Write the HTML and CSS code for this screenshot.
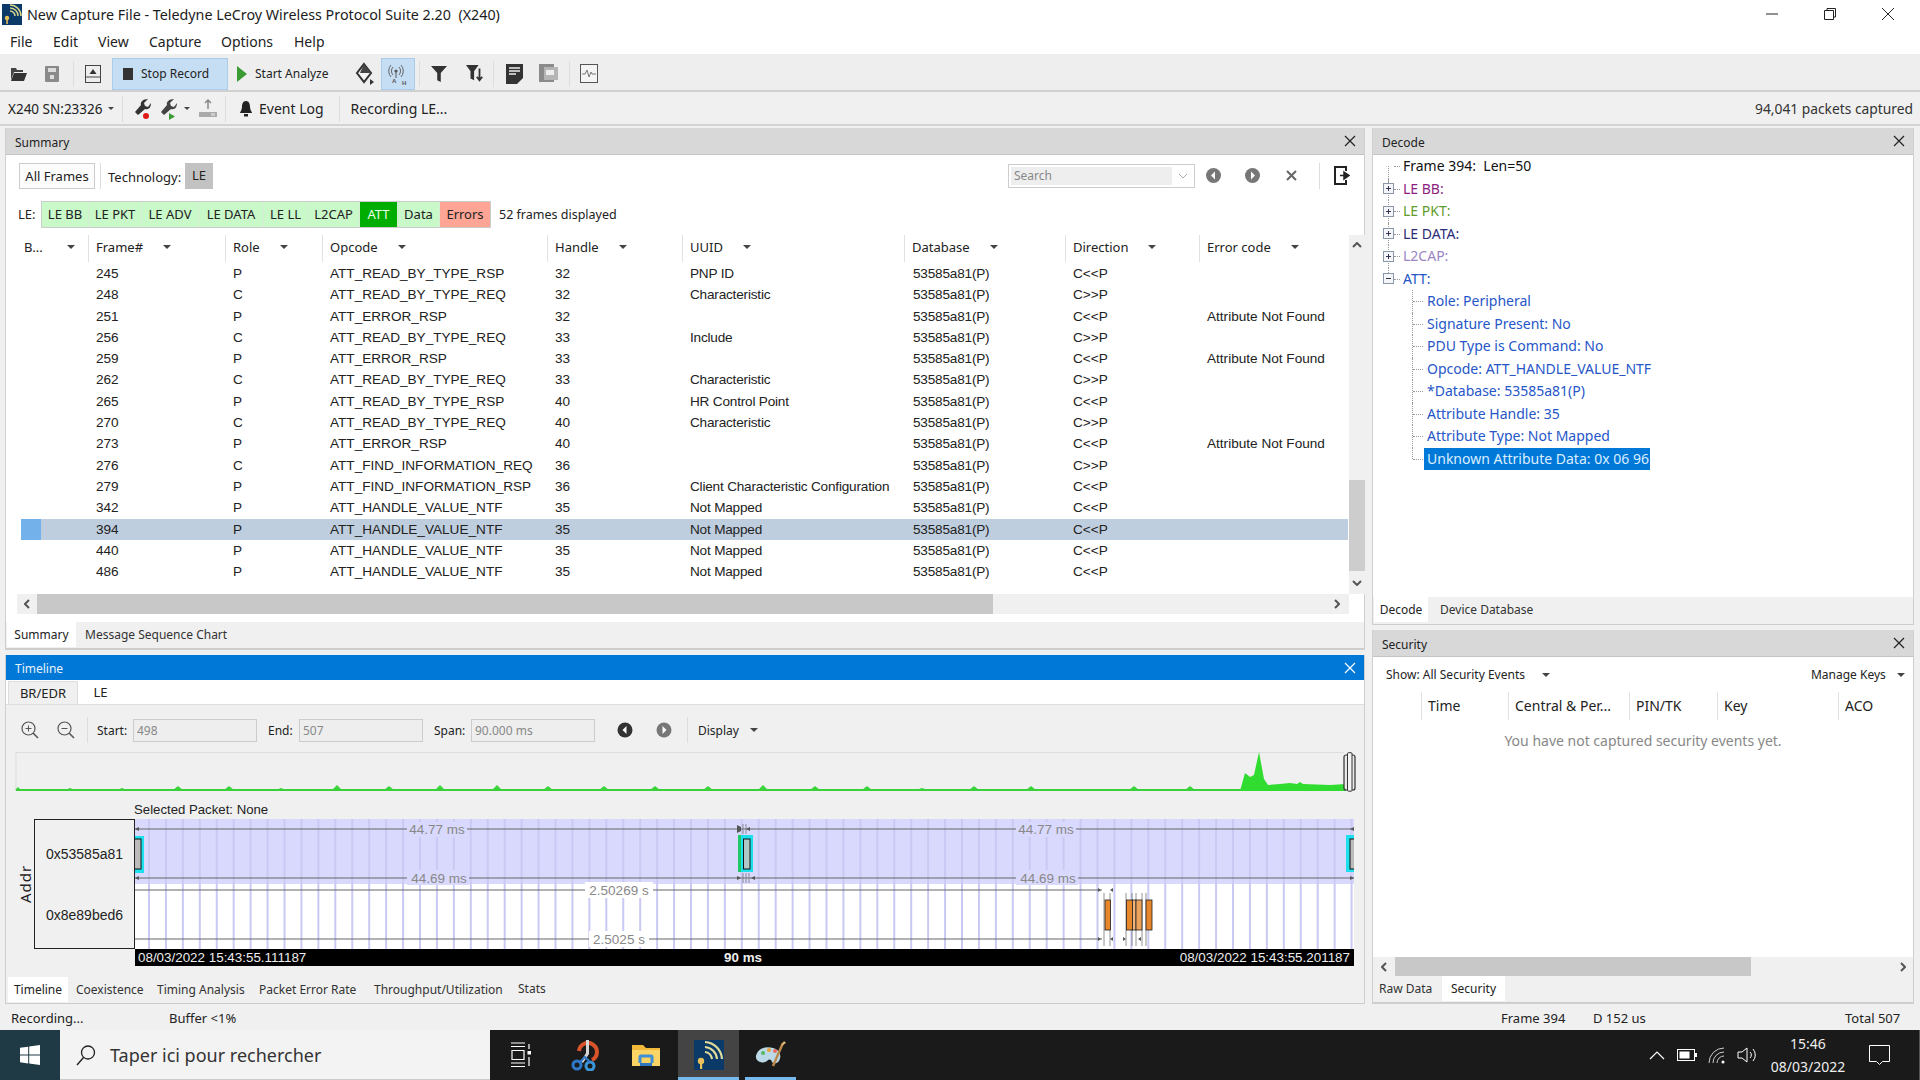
FILE: index.html
```html
<!DOCTYPE html>
<html lang="en">
<head>
<meta charset="utf-8">
<title>Teledyne LeCroy Wireless Protocol Suite</title>
<link rel="stylesheet" href="styles.css">
</head>
<body>
<div class="app">
  <header class="titlebar">
    <svg class="appicon" width="20" height="21" viewBox="0 0 20 21"><rect width="20" height="21" fill="#0b3a68"/><path d="M8 1a11 11 0 0 1 11 11M8 4a8 8 0 0 1 8 8M8 7a5 5 0 0 1 5 5" fill="none" stroke="#d9d48a" stroke-width="1.5"/><circle cx="5" cy="14" r="2.2" fill="#e8c15a"/><rect x="4.3" y="15" width="1.5" height="5" fill="#e8c15a"/></svg>
    <span class="title">New Capture File - Teledyne LeCroy Wireless Protocol Suite 2.20  (X240)</span>
    <div class="winctl">
      <svg width="14" height="14" viewBox="0 0 14 14"><path d="M1 7h12" stroke="#222" stroke-width="1"/></svg>
      <svg width="14" height="14" viewBox="0 0 14 14"><path d="M1.5 3.5h9v9h-9zM4 3.5V1.5h8.5v8.5h-2" fill="none" stroke="#222"/></svg>
      <svg width="14" height="14" viewBox="0 0 14 14"><path d="M1 1l12 12M13 1L1 13" stroke="#222"/></svg>
    </div>
  </header>
  <nav class="menubar"><span>File</span><span>Edit</span><span>View</span><span>Capture</span><span>Options</span><span>Help</span></nav>

  <div class="toolbar tb1">
    <span class="tool"><svg width="20" height="18" viewBox="0 0 20 18"><path d="M3 3h5l1 2h6v2H6L3 15z" fill="#444"/><path d="M6 8h13l-3 8H3z" fill="#333"/></svg></span>
    <span class="tool"><svg width="16" height="18" viewBox="0 0 16 18"><path d="M1 2a1 1 0 0 1 1-1h12a1 1 0 0 1 1 1v14a1 1 0 0 1-1 1H2a1 1 0 0 1-1-1z" fill="#8a8a8a"/><rect x="4" y="3" width="8" height="4" fill="#ddd"/><rect x="6" y="10" width="4" height="4" fill="#ddd"/></svg></span>
    <span class="sep"></span>
    <span class="tool"><svg width="16" height="18" viewBox="0 0 16 18"><rect x=".5" y=".5" width="15" height="17" fill="#eee" stroke="#444"/><path d="M8 4l3.5 5h-7z" fill="#333"/><path d="M1 12h14" stroke="#444"/></svg></span>
    <button class="tbtn active stop"><i class="stopsq"></i>Stop Record</button>
    <span class="analyze"><svg width="12" height="18" viewBox="0 0 12 18"><path d="M1 1l10 8-10 8z" fill="#3a9a34"/></svg>Start Analyze</span>
    <span class="tool"><svg width="22" height="24" viewBox="0 0 22 24"><path d="M11 2l7 9-7 9-7-9z" fill="#f4f4f4" stroke="#333" stroke-width="2"/><path d="M11 2l7 9H7z" fill="#444"/><path d="M17 17l4 3-4 3z" fill="#333"/></svg></span>
    <span class="tool onstate"><svg width="22" height="24" viewBox="0 0 22 24"><circle cx="9" cy="9" r="1.6" fill="#555"/><path d="M6 5a6 6 0 0 0 0 8M12 5a6 6 0 0 1 0 8M4 3a9 9 0 0 0 0 12M14 3a9 9 0 0 1 0 12" fill="none" stroke="#666"/><path d="M9 10v6" stroke="#555"/><text x="5" y="21" class="tiny">A</text><text x="15" y="23" class="tiny">H</text></svg></span>
    <span class="sep"></span>
    <span class="tool"><svg width="16" height="20" viewBox="0 0 18 20"><path d="M0 1h18l-7 8v10l-4-2V9z" fill="#333"/></svg></span>
    <span class="tool ml2"><svg width="18" height="22" viewBox="0 0 20 22"><path d="M0 1h14L9 8v10l-4-2V8z" fill="#333"/><path d="M15 5v12M12 14l3 4 3-4" fill="none" stroke="#333" stroke-width="2"/></svg></span>
    <span class="sep sepn"></span>
    <span class="tool"><svg width="17" height="22" viewBox="0 0 17 22"><path d="M0 1h17v14l-6 6H0z" fill="#333"/><path d="M3 5h11M3 8h11M3 11h7" stroke="#eee" stroke-width="1.5"/></svg></span>
    <span class="tool"><svg width="19" height="21" viewBox="0 0 19 21"><rect x="0" y="1" width="15" height="18" fill="#8a8a8a"/><rect x="5" y="4" width="14" height="13" fill="#b5b5b5"/><rect x="7" y="7" width="8" height="5" fill="#eee"/></svg></span>
    <span class="sep"></span>
    <span class="tool"><svg width="18" height="19" viewBox="0 0 18 19"><rect x=".5" y=".5" width="17" height="18" fill="#f4f4f4" stroke="#555"/><path d="M2 10h3l2-4 2 7 2-5 1 2h4" fill="none" stroke="#777"/></svg></span>
  </div>

  <div class="toolbar tb2">
    <span class="sn">X240 SN:23326</span><i class="caret small"></i>
    <span class="sep sept"></span>
    <span class="tool t26"><svg width="18" height="22" viewBox="0 0 18 22"><path d="M15 1l-4 4 1 3 3 1 3-4c0 4-2 7-6 6L5 17l-3-3 6-7c-1-3 2-6 7-6z" fill="#333"/><circle cx="13" cy="18" r="3" fill="#e01818"/></svg></span>
    <span class="tool t26"><svg width="18" height="22" viewBox="0 0 18 22"><path d="M15 1l-4 4 1 3 3 1 3-4c0 4-2 7-6 6L5 17l-3-3 6-7c-1-3 2-6 7-6z" fill="#444"/><path d="M10 15l6 3.5-6 3.5z" fill="#3a9a34"/></svg></span>
    <i class="caret small gap3"></i>
    <span class="tool t26 ml5"><svg width="20" height="20" viewBox="0 0 20 20"><path d="M10 1v9M7 4l3-3 3 3" fill="none" stroke="#888" stroke-width="1.5"/><rect x="1" y="13" width="18" height="5" fill="#aaa"/><path d="M14 14v3M16 14v3" stroke="#eee"/></svg></span>
    <span class="sep sepe"></span>
    <svg class="bell" width="14" height="18" viewBox="0 0 14 18"><path d="M7 1c3 0 4 3 4 6 0 3 2 5 2 6H1c0-1 2-3 2-6 0-3 1-6 4-6z" fill="#222"/><rect x="5" y="14" width="4" height="2.5" fill="#222"/></svg>
    <span class="evlog">Event Log</span>
    <span class="sep sepl"></span>
    <span class="evlog">Recording LE...</span>
    <span class="pkts">94,041 packets captured</span>
  </div>

  <main class="main">
    <section class="leftcol">
      <div class="panel summary">
        <div class="phead"><span>Summary</span><svg class="x" width="12" height="12" viewBox="0 0 12 12"><path d="M1 1l10 10M11 1L1 11" stroke="#222" stroke-width="1.2"/></svg></div>
        <div class="sumtools">
          <button class="allframes">All Frames</button>
          <span class="vline"></span>
          <span class="techlbl">Technology:</span>
          <span class="techbtn">LE</span>
          <div class="searchbox"><span class="searchin">Search</span><svg width="10" height="6" viewBox="0 0 10 6"><path d="M1 1l4 4 4-4" fill="none" stroke="#aaa"/></svg></div>
          <svg class="navc" width="17" height="17" viewBox="0 0 17 17"><circle cx="8.5" cy="8.5" r="7.5" fill="#777"/><path d="M10 4.5L6 8.5l4 4z" fill="#fff"/></svg>
          <svg class="navc" width="17" height="17" viewBox="0 0 17 17"><circle cx="8.5" cy="8.5" r="7.5" fill="#777"/><path d="M7 4.5l4 4-4 4z" fill="#fff"/></svg>
          <svg class="navx" width="11" height="11" viewBox="0 0 11 11"><path d="M1 1l9 9M10 1l-9 9" stroke="#666" stroke-width="2"/></svg>
          <span class="vline sw"></span>
          <svg class="expico" width="17" height="19" viewBox="0 0 17 19"><path d="M12 5V1H1v17h11v-4" fill="none" stroke="#222" stroke-width="2"/><path d="M6 9.5h7M10 6l5 3.5-5 3.5z" fill="#222" stroke="#222" stroke-width="1.5"/></svg>
        </div>
        <div class="filters">
          <span class="flbl">LE:</span>
          <div class="fgroup"><span>LE BB</span><span>LE PKT</span><span>LE ADV</span><span>LE DATA</span><span>LE LL</span><span>L2CAP</span><span class="on">ATT</span><span>Data</span><span class="err">Errors</span></div>
          <span class="fcount">52 frames displayed</span>
        </div>
        <div class="tablewrap">
          <div class="tablemain">
            <div class="thead"><div class="th first"><span>B...</span><i class="caret"></i></div><div class="th"><span>Frame#</span><i class="caret"></i></div><div class="th"><span>Role</span><i class="caret"></i></div><div class="th"><span>Opcode</span><i class="caret"></i></div><div class="th"><span>Handle</span><i class="caret"></i></div><div class="th"><span>UUID</span><i class="caret"></i></div><div class="th"><span>Database</span><i class="caret"></i></div><div class="th"><span>Direction</span><i class="caret"></i></div><div class="th"><span>Error code</span><i class="caret"></i></div></div>
            <div class="row"><span></span><span>245</span><span>P</span><span>ATT_READ_BY_TYPE_RSP</span><span>32</span><span>PNP ID</span><span>53585a81(P)</span><span>C&lt;&lt;P</span><span></span></div>
            <div class="row"><span></span><span>248</span><span>C</span><span>ATT_READ_BY_TYPE_REQ</span><span>32</span><span>Characteristic</span><span>53585a81(P)</span><span>C&gt;&gt;P</span><span></span></div>
            <div class="row"><span></span><span>251</span><span>P</span><span>ATT_ERROR_RSP</span><span>32</span><span></span><span>53585a81(P)</span><span>C&lt;&lt;P</span><span>Attribute Not Found</span></div>
            <div class="row"><span></span><span>256</span><span>C</span><span>ATT_READ_BY_TYPE_REQ</span><span>33</span><span>Include</span><span>53585a81(P)</span><span>C&gt;&gt;P</span><span></span></div>
            <div class="row"><span></span><span>259</span><span>P</span><span>ATT_ERROR_RSP</span><span>33</span><span></span><span>53585a81(P)</span><span>C&lt;&lt;P</span><span>Attribute Not Found</span></div>
            <div class="row"><span></span><span>262</span><span>C</span><span>ATT_READ_BY_TYPE_REQ</span><span>33</span><span>Characteristic</span><span>53585a81(P)</span><span>C&gt;&gt;P</span><span></span></div>
            <div class="row"><span></span><span>265</span><span>P</span><span>ATT_READ_BY_TYPE_RSP</span><span>40</span><span>HR Control Point</span><span>53585a81(P)</span><span>C&lt;&lt;P</span><span></span></div>
            <div class="row"><span></span><span>270</span><span>C</span><span>ATT_READ_BY_TYPE_REQ</span><span>40</span><span>Characteristic</span><span>53585a81(P)</span><span>C&gt;&gt;P</span><span></span></div>
            <div class="row"><span></span><span>273</span><span>P</span><span>ATT_ERROR_RSP</span><span>40</span><span></span><span>53585a81(P)</span><span>C&lt;&lt;P</span><span>Attribute Not Found</span></div>
            <div class="row"><span></span><span>276</span><span>C</span><span>ATT_FIND_INFORMATION_REQ</span><span>36</span><span></span><span>53585a81(P)</span><span>C&gt;&gt;P</span><span></span></div>
            <div class="row"><span></span><span>279</span><span>P</span><span>ATT_FIND_INFORMATION_RSP</span><span>36</span><span>Client Characteristic Configuration</span><span>53585a81(P)</span><span>C&lt;&lt;P</span><span></span></div>
            <div class="row"><span></span><span>342</span><span>P</span><span>ATT_HANDLE_VALUE_NTF</span><span>35</span><span>Not Mapped</span><span>53585a81(P)</span><span>C&lt;&lt;P</span><span></span></div>
            <div class="row sel"><span class="mark"></span><span>394</span><span>P</span><span>ATT_HANDLE_VALUE_NTF</span><span>35</span><span>Not Mapped</span><span>53585a81(P)</span><span>C&lt;&lt;P</span><span></span></div>
            <div class="row"><span></span><span>440</span><span>P</span><span>ATT_HANDLE_VALUE_NTF</span><span>35</span><span>Not Mapped</span><span>53585a81(P)</span><span>C&lt;&lt;P</span><span></span></div>
            <div class="row"><span></span><span>486</span><span>P</span><span>ATT_HANDLE_VALUE_NTF</span><span>35</span><span>Not Mapped</span><span>53585a81(P)</span><span>C&lt;&lt;P</span><span></span></div>
          </div>
          <div class="vscroll">
            <svg width="10" height="6" viewBox="0 0 10 6"><path d="M1 5l4-4 4 4" fill="none" stroke="#555" stroke-width="2"/></svg>
            <i class="vthumb"></i>
            <svg width="10" height="6" viewBox="0 0 10 6"><path d="M1 1l4 4 4-4" fill="none" stroke="#555" stroke-width="2"/></svg>
          </div>
        </div>
        <div class="hscroll hs1">
          <svg width="6" height="10" viewBox="0 0 6 10"><path d="M5 1L1 5l4 4" fill="none" stroke="#555" stroke-width="2"/></svg>
          <i class="hthumb t1"></i>
          <svg width="6" height="10" viewBox="0 0 6 10"><path d="M1 1l4 4-4 4" fill="none" stroke="#555" stroke-width="2"/></svg>
        </div>
        <div class="tabs sumtabs"><span class="tab on">Summary</span><span class="tab">Message Sequence Chart</span></div>
      </div>

      <div class="panel timeline">
        <div class="phead blue"><span>Timeline</span><svg class="x" width="12" height="12" viewBox="0 0 12 12"><path d="M1 1l10 10M11 1L1 11" stroke="#fff" stroke-width="1.2"/></svg></div>
        <div class="subtabs"><span class="subtab">BR/EDR</span><span class="subtab on">LE</span></div>
        <div class="tltools">
          <svg class="zoomi" width="18" height="18" viewBox="0 0 18 18"><circle cx="7.5" cy="7.5" r="6.5" fill="none" stroke="#555" stroke-width="1.2"/><path d="M12 12l5 5" stroke="#555" stroke-width="1.6"/><path d="M4.5 7.5h6M7.5 4.5v6" stroke="#555"/></svg>
          <svg class="zoomi" width="18" height="18" viewBox="0 0 18 18"><circle cx="7.5" cy="7.5" r="6.5" fill="none" stroke="#555" stroke-width="1.2"/><path d="M12 12l5 5" stroke="#555" stroke-width="1.6"/><path d="M4.5 7.5h6" stroke="#555"/></svg>
          <span class="vline tlsep"></span>
          <label class="fld"><span>Start:</span><span class="inp">498</span></label>
          <label class="fld"><span>End:</span><span class="inp">507</span></label>
          <label class="fld"><span>Span:</span><span class="inp">90.000 ms</span></label>
          <svg class="nc1" width="16" height="16" viewBox="0 0 16 16"><circle cx="8" cy="8" r="7.5" fill="#333"/><path d="M9.5 4L5.5 8l4 4z" fill="#fff"/></svg>
          <svg class="nc2" width="16" height="16" viewBox="0 0 16 16"><circle cx="8" cy="8" r="7.5" fill="#777"/><path d="M6.5 4l4 4-4 4z" fill="#fff"/></svg>
          <span class="vline tlsep2"></span>
          <span class="disp">Display</span><i class="caret dcaret"></i>
        </div>
        <svg class="minichart" width="1341" height="40" viewBox="0 0 1341 40">
          <path d="M0 .5H1328" stroke="#ddd"/>
          <path d="M0 0V39" stroke="#ddd"/>
          <path d="M-1 38 2 35 5 38ZM49 38l5-2 5 2ZM101 38l5-2 5 2ZM157 38l5-4 5 4ZM208 38l5-4 5 4ZM260 38l5-2 5 2ZM316 38l5-5 5 5ZM368 38l5-4 5 4ZM419 38l5-5 5 5ZM476 38l5-5 5 5ZM527 38l5-4 5 4ZM583 38l5-4 5 4ZM634 38l5-4 5 4ZM687 38l5-4 5 4ZM742 38l5-5 5 5ZM794 38l5-4 5 4ZM846 38l5-4 5 4ZM900 38l6-2 6 2ZM953 38l5-4 5 4ZM1010 38l5-4 5 4ZM1113 38l5-4 5 4ZM1169 38l5-4 5 4Z" fill="#39d439"/>
          <path d="M0 38H1330" stroke="#3ad03a" stroke-width="2"/>
          <path d="M1224 39L1229 21L1234 25L1238 23L1243 0L1248 27L1252 33L1264 32L1274 31L1281 32L1284 30L1287 32L1314 33L1330 32V39Z" fill="#2fdc2f"/>
          <rect x="1328" y="3" width="11" height="35" rx="2" fill="#e8e8e8" stroke="#333" stroke-width="1.2"/>
          <rect x="1331.5" y="0.7" width="4.5" height="38.5" rx="1" fill="#f4f4f4" stroke="#333"/>
        </svg>
        <div class="selpkt">Selected Packet: None</div>
        <div class="plotrow">
          <div class="addrlbl"><span>Addr</span></div>
          <div class="addrbox"><span>0x53585a81</span><span>0x8e89bed6</span></div>
          <div class="plotcol">
            <div class="plot">
              <svg class="plotsvg" width="1219" height="130" viewBox="0 0 1219 130">
                <g stroke="#666" stroke-width="1.2">
                  <path d="M0 10H1219M0 59H1219M0 71H967M0 120H967"/>
                </g>
                <g class="lbg1"><rect x="272" y="3" width="60" height="15"/><rect x="881" y="3" width="60" height="15"/><rect x="272" y="51" width="62" height="15"/><rect x="881" y="51" width="62" height="15"/></g>
                <g class="lbg2"><rect x="450" y="63" width="68" height="16"/><rect x="454" y="112" width="60" height="16"/></g>
                <g class="plbl"><text x="302" y="15">44.77 ms</text><text x="911" y="15">44.77 ms</text><text x="304" y="64">44.69 ms</text><text x="913" y="64">44.69 ms</text><text x="484" y="76">2.50269 s</text><text x="484" y="125">2.5025 s</text></g>
                <path d="M0 10l4-2v4zM606 8l-4-2v8l4-2zM611 10l4-2v4zM1215 10l4-2v4zM0 59l4-2v4zM606 59l-4-2v4zM616 59l4-2v4zM1219 59l-4-2v4zM966 71l-3-2v4zM975 71l3-2v4zM966 120l-3-2v4zM975 120l3-2v4zM991 120l-3-2v4zM1003 120l3-2v4z" fill="#555"/>
                <path d="M608 5v10M611 5v10M608 54v10M611 54v10M614 54v10M969 74V127M975 74V127M991 74V127M997 74V127M1001 74V127M1007 74V127M1011 74V127" stroke="#777" stroke-width=".8"/>
                <rect x="0" y="17" width="9" height="37" fill="#1ce0ee"/><rect x="-1" y="20" width="7" height="30" fill="#bbb" stroke="#111"/>
                <rect x="603" y="16" width="3" height="37" fill="#22c866"/><rect x="606" y="16" width="12" height="37" fill="#1ce0ee"/><rect x="608.5" y="20" width="6.5" height="30" fill="#b0c8c8" stroke="#111"/>
                <rect x="1211" y="16" width="8" height="37" fill="#1ce0ee"/><rect x="1215" y="20" width="6" height="30" fill="#bbb" stroke="#111"/>
                <g stroke="#222" stroke-width=".8"><rect x="970" y="81" width="5.5" height="30" fill="#e8862a"/><rect x="991.5" y="81" width="6" height="30" fill="#e8862a"/><rect x="997.5" y="81" width="3.5" height="30" fill="#f2b57a"/><rect x="1001" y="81" width="6" height="30" fill="#eea35a"/><rect x="1011" y="81" width="6" height="30" fill="#e8862a"/></g>
              </svg>
            </div>
            <div class="blackbar"><span>08/03/2022 15:43:55.111187</span><b>90 ms</b><span>08/03/2022 15:43:55.201187</span></div>
          </div>
        </div>
        <div class="tabs tltabs"><span class="tab on">Timeline</span><span class="tab">Coexistence</span><span class="tab">Timing Analysis</span><span class="tab">Packet Error Rate</span><span class="tab">Throughput/Utilization</span><span class="tab">Stats</span></div>
      </div>
    </section>

    <section class="rightcol">
      <div class="panel decode">
        <div class="phead"><span>Decode</span><svg class="x" width="12" height="12" viewBox="0 0 12 12"><path d="M1 1l10 10M11 1L1 11" stroke="#222" stroke-width="1.2"/></svg></div>
        <div class="tree">
          <div class="node root"><i class="nob"></i><span class="c-black">Frame 394:  Len=50</span></div>
          <div class="node"><i class="exp plus"></i><span class="c-bb">LE BB:</span></div>
          <div class="node"><i class="exp plus"></i><span class="c-pkt">LE PKT:</span></div>
          <div class="node"><i class="exp plus"></i><span class="c-data">LE DATA:</span></div>
          <div class="node"><i class="exp plus"></i><span class="c-l2">L2CAP:</span></div>
          <div class="node last"><i class="exp"></i><span class="c-att">ATT:</span></div>
          <div class="leaf"><span>Role: Peripheral</span></div>
          <div class="leaf"><span>Signature Present: No</span></div>
          <div class="leaf"><span>PDU Type is Command: No</span></div>
          <div class="leaf"><span>Opcode: ATT_HANDLE_VALUE_NTF</span></div>
          <div class="leaf"><span>*Database: 53585a81(P)</span></div>
          <div class="leaf"><span>Attribute Handle: 35</span></div>
          <div class="leaf"><span>Attribute Type: Not Mapped</span></div>
          <div class="leaf endleaf"><span class="hl">Unknown Attribute Data: 0x 06 96</span></div>
        </div>
        <div class="tabs dectabs"><span class="tab on">Decode</span><span class="tab">Device Database</span></div>
      </div>

      <div class="panel security">
        <div class="phead"><span>Security</span><svg class="x" width="12" height="12" viewBox="0 0 12 12"><path d="M1 1l10 10M11 1L1 11" stroke="#222" stroke-width="1.2"/></svg></div>
        <div class="secbody">
          <div class="secbar"><span>Show: All Security Events</span><i class="caret scar"></i><span class="mkeys">Manage Keys</span><i class="caret kcar"></i></div>
          <div class="sechead"><span>Time</span><span>Central &amp; Per...</span><span>PIN/TK</span><span>Key</span><span>ACO</span></div>
          <p class="empty">You have not captured security events yet.</p>
        </div>
        <div class="hscroll hs2">
          <svg width="6" height="10" viewBox="0 0 6 10"><path d="M5 1L1 5l4 4" fill="none" stroke="#555" stroke-width="2"/></svg>
          <i class="hthumb t2"></i>
          <svg width="6" height="10" viewBox="0 0 6 10"><path d="M1 1l4 4-4 4" fill="none" stroke="#555" stroke-width="2"/></svg>
        </div>
        <div class="tabs sectabs"><span class="tab">Raw Data</span><span class="tab on">Security</span></div>
      </div>
    </section>
  </main>

  <footer class="status"><span class="st1">Recording...</span><span class="st2">Buffer &lt;1%</span><span class="st3">Frame 394</span><span class="st4">D 152 us</span><span class="st5">Total 507</span></footer>

  <div class="taskbar">
    <div class="startbtn"><svg width="20" height="20" viewBox="0 0 20 20"><path d="M0 2.8l8.2-1.1v7.9H0zM9.2 1.5L20 0v9.6H9.2zM0 10.5h8.2v7.9L0 17.2zM9.2 10.5H20V20L9.2 18.5z" fill="#fff"/></svg></div>
    <div class="searchbar"><svg width="22" height="22" viewBox="0 0 22 22"><circle cx="13" cy="8.5" r="6.5" fill="none" stroke="#222" stroke-width="1.3"/><path d="M8.5 13.5L2 21" stroke="#222" stroke-width="1.4"/></svg><span>Taper ici pour rechercher</span></div>
    <div class="ticons">
      <span class="ticon"><svg width="22" height="26" viewBox="0 0 22 26"><path d="M1 1h14M1 4.500h14M1 21h14M1 24.500h14M2 8.500h12v9H2zM19 2v5M19 15v9" fill="none" stroke="#fff" stroke-width="1.2"/><rect x="17.500" y="9" width="3.500" height="3.500" fill="#fff"/></svg></span>
      <span class="ticon"><svg width="28" height="32" viewBox="0 0 28 32"><path d="M8 12a9 9 0 1 1 13 9" fill="none" stroke="#d9542b" stroke-width="4"/><path d="M15 1l3 0 0 14-6 9-2-2 5-8z" fill="#d8d8d8"/><circle cx="6" cy="26" r="4" fill="none" stroke="#2e78c8" stroke-width="3"/><circle cx="19" cy="27" r="4" fill="none" stroke="#3b96d8" stroke-width="3"/><path d="M9 23l5-5 5 5" fill="none" stroke="#2e78c8" stroke-width="2"/></svg></span>
      <span class="ticon"><svg width="28" height="24" viewBox="0 0 28 24"><path d="M0 2h11l3 3h14v18H0z" fill="#f2b83a"/><rect y="7" width="28" height="16" fill="#fbd466"/><path d="M8 20v-6a1 1 0 0 1 1-1h10a1 1 0 0 1 1 1v6" fill="none" stroke="#3f8fd8" stroke-width="3"/><rect x="8" y="20" width="12" height="3" fill="#2f78c0"/></svg></span>
      <span class="ticon act"><svg width="30" height="30" viewBox="0 0 30 30"><rect width="30" height="30" fill="#0b3a68"/><path d="M11 2a18 18 0 0 1 17 17M11 7a13 13 0 0 1 12 12M11 12a8 8 0 0 1 7 7" fill="none" stroke="#e4dd9a" stroke-width="2.200"/><circle cx="7" cy="21" r="3.200" fill="#e8c15a"/><rect x="6" y="22" width="2.200" height="7" fill="#e8c15a"/></svg></span>
      <span class="ticon und"><svg width="32" height="30" viewBox="0 0 32 30"><path d="M1 16c2-8 10-10 17-8 7 2 9 8 6 13-2 3-6 3-7 1-1-3-3-3-5-1-3 3-12 1-11-5z" fill="#bcd9e8"/><circle cx="8" cy="13" r="2" fill="#55b860"/><circle cx="14" cy="10" r="2" fill="#e8a23a"/><circle cx="20" cy="11" r="2" fill="#e86a5a"/><path d="M18 26L28 3" stroke="#b8894a" stroke-width="2.500"/><path d="M26 6l3-5 2 2z" fill="#e8c07a"/></svg></span>
    </div>
    <div class="tray">
      <span class="tr"><svg width="16" height="9" viewBox="0 0 16 9"><path d="M1 8l7-7 7 7" fill="none" stroke="#fff" stroke-width="1.200"/></svg></span>
      <span class="tr"><svg width="20" height="12" viewBox="0 0 20 12"><rect x=".5" y=".5" width="17" height="11" fill="none" stroke="#fff"/><rect x="2.500" y="2.500" width="10" height="7" fill="#fff"/><rect x="18" y="4" width="2" height="4" fill="#fff"/></svg></span>
      <span class="tr"><svg width="18" height="17" viewBox="0 0 18 17"><path d="M1 16A15 15 0 0 1 16 1M5 16A11 11 0 0 1 16 5M9 16a7 7 0 0 1 7-7" fill="none" stroke="#ccc"/><circle cx="15" cy="15" r="1.500" fill="#fff"/></svg></span>
      <span class="tr"><svg width="21" height="18" viewBox="0 0 21 18"><path d="M1 6h4l5-4v14l-5-4H1z" fill="none" stroke="#fff"/><path d="M13 6a4 4 0 0 1 0 6M16 3a9 9 0 0 1 0 12" fill="none" stroke="#fff"/></svg></span>
      <div class="clock"><span>15:46</span><span>08/03/2022</span></div>
      <span class="notif"><svg width="21" height="20" viewBox="0 0 21 20"><path d="M.5.5h20v16h-7l-3 3-3-3h-7z" fill="none" stroke="#fff"/></svg></span>
      <i class="showdesk"></i>
    </div>
  </div>
</div>
</body>
</html>
```

FILE: styles.css
```css
* { box-sizing: border-box; }
html, body { margin: 0; padding: 0; }
body { width: 1920px; height: 1080px; overflow: hidden; background: #f0f0f0; color: #222; font-family: "Noto Sans", "Open Sans", sans-serif; font-size: 13px; }
.app { display: flex; flex-direction: column; width: 1920px; height: 1080px; }
i { display: block; font-style: normal; }

.titlebar { height: 28px; background: #fff; display: flex; align-items: center; padding-left: 2px; flex: none; }
.appicon { margin-right: 5px; margin-top: 1px; }
.title { font-size: 14.3px; white-space: pre; color: #1c1c1c; }
.winctl { margin-left: auto; display: flex; gap: 44px; padding-right: 25px; }
.menubar { height: 26px; background: #fff; display: flex; align-items: center; padding-left: 10px; flex: none; font-size: 14px; color: #222; }
.menubar span:nth-child(1) { width: 43px; }
.menubar span:nth-child(2) { width: 45px; }
.menubar span:nth-child(3) { width: 51px; }
.menubar span:nth-child(4) { width: 72px; }
.menubar span:nth-child(5) { width: 73px; }

.toolbar { display: flex; align-items: center; flex: none; }
.tb1 { height: 38px; background: #eee; border-bottom: 2px solid #d0d0d0; padding-left: 1px; padding-top: 3px; }
.tb2 { height: 34px; background: #f0f0f0; border-bottom: 2px solid #d4d4d4; padding-top: 1px; }
.tool { width: 34px; height: 32px; display: flex; align-items: center; justify-content: center; flex: none; }
.t26 { width: 26px; }
.sep { width: 1px; height: 26px; background: #ddd; margin: 0 2px 0 4px; flex: none; }
.sepn { margin: 0 3px 0 1px; }
.ml2 { margin-left: 2px; }
.ml5 { margin-left: 5px; }
.tbtn { font: inherit; font-size: 12px; color: #222; display: flex; align-items: center; padding: 0; }
.active { background: #c6def4; border: 1px solid #a9cdea; }
.stop { width: 116px; height: 32px; margin-left: 2px; padding-left: 10px; }
.stopsq { width: 10px; height: 12px; background: #333; margin-right: 8px; }
.analyze { width: 111px; margin-left: 8px; display: flex; align-items: center; gap: 7px; font-size: 12px; color: #222; }
.onstate { background: #c6def4; border: 1px solid #a9cdea; }
.tiny { font: 700 6px "Liberation Sans", sans-serif; fill: #555; }

.sn { font-size: 13.5px; margin-left: 8px; width: 100px; white-space: nowrap; }
.caret { width: 0; height: 0; border-left: 4.5px solid transparent; border-right: 4.5px solid transparent; border-top: 4.5px solid #444; flex: none; }
.caret.small { border-left-width: 3px; border-right-width: 3px; border-top-width: 3px; }
.gap3 { margin-left: 3px; }
.sept { margin: 0 6px 0 8px; }
.sepe { margin: 0 13px 0 4px; }
.bell { margin-right: 6px; }
.evlog { font-size: 14px; white-space: nowrap; }
.sepl { margin: 0 11px 0 15px; }
.pkts { margin-left: auto; padding-right: 7px; font-size: 13.8px; color: #333; }

.main { flex: 1; display: flex; gap: 7px; padding: 2px 6px 1px 5px; min-height: 0; }
.leftcol { width: 1360px; display: flex; flex-direction: column; gap: 5px; }
.rightcol { width: 542px; display: flex; flex-direction: column; gap: 5px; }
.panel { display: flex; flex-direction: column; border: 1px solid #cfcfcf; border-top: 0; background: #f0f0f0; }
.summary { height: 522px; }
.timeline { height: 349px; }
.decode { height: 497px; }
.security { height: 374px; }
.phead { height: 27px; flex: none; background: #d8d8d8; border-bottom: 1px solid #c4c4c4; display: flex; align-items: center; justify-content: space-between; padding: 2px 8px 0 9px; font-size: 12px; color: #222; }
.phead .x { margin-top: -2px; }
.phead.blue { height: 25px; background: #0078d7; color: #e8f3fc; border-bottom: 0; }

.sumtools { height: 43px; background: #fff; flex: none; display: flex; align-items: flex-start; padding: 8px 0 0 13px; }
.allframes { font: inherit; font-size: 13px; width: 76px; height: 26px; padding: 0; background: #fcfcfc; border: 1px solid #ccc; color: #222; }
.vline { display: block; width: 1px; height: 26px; background: #ddd; flex: none; }
.sumtools > .vline { margin: 0 7px 0 5px; }
.techlbl { font-size: 13px; line-height: 28px; width: 77px; }
.techbtn { width: 28px; height: 26px; background: #c2c2c2; font-size: 13px; text-align: center; line-height: 25px; }
.searchbox { margin-left: 795px; margin-top: 1px; width: 187px; height: 24px; border: 1px solid #ccc; display: flex; align-items: center; background: #fff; padding: 2px; }
.searchin { width: 161px; height: 18px; background: #eee; color: #888; font-size: 12px; padding-left: 3px; line-height: 17px; margin-right: 6px; }
.navc { margin: 4px 0 0 10px; }
.navc + .navc { margin-left: 22px; }
.navx { margin: 7px 0 0 25px; }
.sumtools > .vline.sw { margin: 0 14px 0 22px; }
.expico { margin-top: 3px; }

.filters { height: 37px; background: #fff; flex: none; display: flex; align-items: flex-start; padding: 3px 0 0 12px; font-size: 13px; }
.flbl { line-height: 27px; width: 23px; }
.fgroup { display: flex; height: 27px; border: 1px solid #ccc; font-size: 13px; background: #c9f8c9; }
.fgroup span { line-height: 25px; text-align: center; border-right: 1px solid #d7ecd7; }
.fgroup span:nth-child(1) { width: 47px; }
.fgroup span:nth-child(2) { width: 53px; }
.fgroup span:nth-child(3) { width: 57px; }
.fgroup span:nth-child(4) { width: 65px; }
.fgroup span:nth-child(5) { width: 44px; }
.fgroup span:nth-child(6) { width: 52px; }
.fgroup span:nth-child(7) { width: 38px; }
.fgroup span:nth-child(8) { width: 42px; }
.fgroup span:nth-child(9) { width: 50px; border-right: 0; }
.fgroup .on { background: #00ad00; color: #e8ffe8; }
.fgroup .err { background: #ffa596; }
.fcount { margin-left: 8px; line-height: 27px; font-size: 12.5px; }

.tablewrap { height: 359px; flex: none; display: flex; background: #fff; }
.tablemain { width: 1343px; font-family: "Liberation Sans", Arial, sans-serif; font-size: 13.6px; color: #222; }
.thead { display: grid; grid-template-columns: 67px 137px 97px 225px 135px 222px 161px 134px 149px; height: 28px; margin-left: 15px; font-family: "Noto Sans", sans-serif; font-size: 13px; }
.th { display: flex; align-items: center; gap: 20px; border-left: 1px solid #e2e2e2; padding: 0 0 3px 7px; height: 27px; }
.th.first { border-left: 0; padding-left: 3px; gap: 24px; }
.row { display: grid; grid-template-columns: 75px 137px 97px 225px 135px 223px 160px 134px 141px; height: 21.3px; line-height: 21px; margin-left: 15px; white-space: nowrap; }
.row span:nth-child(6), .row span:nth-child(7) { letter-spacing: -.2px; }
.row.sel { background: #bfcedf; }
.mark { width: 20px; height: 21px; background: #72b1ea; }
.vscroll { width: 16px; flex: none; background: #f0f0f0; margin-left: 1px; display: flex; flex-direction: column; align-items: center; padding-top: 7px; }
.vthumb { width: 16px; height: 91px; background: #cdcdcd; margin-top: 232px; margin-bottom: 9px; }

.hscroll { display: flex; align-items: center; flex: none; }
.hs1 { height: 28px; background: #fff linear-gradient(#f0f0f0 20px, #fff 20px) 11px 0 / 1332px 100% no-repeat; padding: 0 0 8px 18px; }
.hthumb { height: 100%; background: #c8c8c8; }
.hs1 .t1 { width: 956px; margin: 0 341px 0 7px; height: 20px; }
.hs1 svg { flex: none; }
.tabs { display: flex; flex: none; background: #f0f0f0; font-size: 12px; }
.tab { display: block; padding: 0 9px; height: 25px; line-height: 26px; white-space: nowrap; color: #333; }
.tab.on { background: #fff; color: #222; }
.sumtabs { height: 27px; border-bottom: 1px solid #ccc; padding-left: 1px; }
.sumtabs .on { width: 69px; padding: 0; text-align: center; }

.subtabs { display: flex; height: 25px; background: #fff; flex: none; border-bottom: 1px solid #ddd; padding-left: 2px; font-size: 13px; align-items: flex-end; }
.subtab { height: 23px; line-height: 23px; text-align: center; width: 70px; background: #f0f0f0; border: 1px solid #ddd; border-bottom: 0; }
.subtab.on { width: 45px; background: #fff; border: 0; height: 24px; line-height: 24px; }
.tltools { height: 47px; flex: none; display: flex; align-items: center; padding: 3px 0 0 15px; }
.zoomi { margin-right: 18px; }
.zoomi + .zoomi { margin-right: 12px; }
.tlsep { margin: 0 9px 0 0; }
.fld { display: flex; align-items: center; font-size: 12px; margin-right: 11px; }
.fld:nth-of-type(1) span:first-child { width: 36px; }
.fld:nth-of-type(2) span:first-child { width: 31px; }
.fld:nth-of-type(3) span:first-child { width: 37px; }
.inp { display: block; width: 124px; height: 23px; line-height: 21px; background: #eee; border: 1px solid #ccc; color: #888; font-size: 12px; padding-left: 3px; }
.nc1 { margin-left: 11px; }
.nc2 { margin-left: 23px; }
.tlsep2 { margin: 0 10px 0 15px; }
.disp { font-size: 12px; }
.dcaret { margin-left: 11px; }
.minichart { display: block; margin: 0 0 0 10px; flex: none; overflow: visible; }
.selpkt { height: 27px; padding: 9px 0 0 128px; font: 13.2px/18px "Liberation Sans", sans-serif; color: #222; flex: none; }
.plotrow { display: flex; height: 147px; flex: none; padding-left: 11px; }
.addrlbl { width: 17px; height: 130px; display: flex; align-items: center; justify-content: center; }
.addrlbl span { transform: rotate(-90deg); font-size: 15px; letter-spacing: 1px; color: #222; display: block; }
.addrbox { width: 101px; height: 130px; border: 1.5px solid #222; display: flex; flex-direction: column; justify-content: space-around; align-items: center; font: 14px "Liberation Sans", sans-serif; padding: 3px 0 3px; }
.plotcol { width: 1219px; }
.plot { height: 130px; background-image: linear-gradient(90deg, #c9c9f3 2px, transparent 2px), linear-gradient(#d9d9fd 65px, #fff 65px); background-size: 16.95px 100%, 100% 100%; background-repeat: repeat-x, no-repeat; background-position: 13px 0, 0 0; }
.plotsvg { display: block; overflow: hidden; }
.lbg1 rect { fill: #d9d9fd; }
.lbg2 rect { fill: #fff; }
.plbl text { font: 13.5px "Liberation Sans", sans-serif; fill: #888; text-anchor: middle; }
.blackbar { height: 17px; background: #000; color: #eee; display: flex; justify-content: space-between; align-items: center; padding: 0 4px 0 3px; font: 13.4px/17px "Liberation Sans", sans-serif; }
.tltabs { margin-top: 11px; height: 27px; border-bottom: 1px solid #ccc; padding-left: 2px; font-size: 12px; }
.tltabs .on { width: 60px; padding: 0; text-align: center; }
.tltabs .tab:nth-child(2) { padding: 0 0 0 8px; width: 89px; }
.tltabs .tab:nth-child(3) { padding: 0; width: 102px; }
.tltabs .tab:nth-child(4) { padding: 0; width: 115px; }
.tltabs .tab:nth-child(5) { padding: 0; width: 144px; }
.tltabs .tab:nth-child(6) { padding: 0; line-height: 24px; }

.tree { height: 442px; flex: none; background: #fff; font-size: 14px; }
.node, .leaf { height: 22.5px; line-height: 22px; display: flex; align-items: center; position: relative; white-space: pre; }
.node { padding-left: 10px; }
.nob, .exp { display: block; width: 11px; height: 11px; flex: none; margin-right: 9px; }
.node::before { content: ""; position: absolute; left: 15px; top: 0; height: 100%; border-left: 1px dotted #999; }
.node::after { content: ""; position: absolute; left: 21px; top: 11px; width: 6px; border-top: 1px dotted #999; }
.root::before { top: 11px; }
.last::before { height: 11px; }
.exp { position: relative; z-index: 1; border: 1px solid #8a97a8; background: linear-gradient(#333, #333) center / 5px 1px no-repeat, #f4f6fa; }
.exp.plus { background: linear-gradient(#335, #335) center / 5px 1px no-repeat, linear-gradient(#335, #335) center / 1px 5px no-repeat, #f4f6fa; }
.c-black { color: #111; }
.c-bb { color: #8c1f7f; }
.c-pkt { color: #5f9c2c; }
.c-data { color: #2a2c78; }
.c-l2 { color: #9a86c4; }
.c-att { color: #2255c4; }
.leaf { padding-left: 54px; color: #2656c8; }
.leaf::before { content: ""; position: absolute; left: 39px; top: 0; height: 100%; border-left: 1px dotted #999; }
.leaf::after { content: ""; position: absolute; left: 40px; top: 11px; width: 10px; border-top: 1px dotted #999; }
.endleaf::before { height: 11px; }
.hl { background: #0078d7; color: #dbeeff; margin-left: -3px; padding: 0 3px; height: 22.5px; width: 226px; display: block; }
.dectabs { height: 28px; font-size: 12px; border-bottom: 1px solid #ccc; }
.dectabs .on { width: 54px; padding: 0; text-align: center; background: #fff; margin-left: 1px; }
.dectabs .tab:nth-child(2) { padding-left: 12px; }

.secbody { height: 300px; background: #fff; flex: none; }
.secbar { height: 35px; display: flex; align-items: center; padding-left: 13px; font-size: 12px; }
.scar { margin-left: 17px; }
.mkeys { margin-left: 261px; }
.kcar { margin-left: 11px; }
.sechead { display: grid; grid-template-columns: 87px 121px 88px 121px 60px; margin-left: 48px; height: 28px; font-size: 14px; }
.sechead span { border-left: 1px solid #e2e2e2; padding-left: 6px; line-height: 27px; white-space: nowrap; }
.empty { margin: 11px 0 0; text-align: center; font-size: 14px; color: #888; }
.hs2 { height: 19px; background: #f0f0f0; padding: 0 7px 0 8px; }
.hs2 .hthumb { width: 356px; margin: 0 149px 0 8px; }
.sectabs { height: 27px; border-bottom: 1px solid #ccc; font-size: 12px; }
.sectabs .tab { padding: 0 0 0 6px; width: 69px; }
.sectabs .on { background: #fff; width: 63px; padding: 0; text-align: center; }

.status { height: 25px; flex: none; background: #f0f0f0; display: flex; align-items: center; font-size: 13px; }
.st1 { margin-left: 11px; width: 158px; }
.st2 { width: 1332px; }
.st3 { width: 92px; }
.st4 { width: 252px; }

.taskbar { height: 50px; flex: none; background: #1a1a1a; display: flex; }
.startbtn { width: 60px; background: #1f3a44; display: flex; align-items: center; justify-content: center; }
.searchbar { width: 430px; background: #f3f3f3; display: flex; align-items: center; padding-left: 15px; gap: 13px; font-size: 18px; color: #333; border-bottom: 1px solid #ccc; }
.ticons { display: flex; }
.ticon { width: 61px; height: 50px; display: flex; align-items: center; justify-content: center; }
.ticon:nth-child(2) { margin-left: 3px; }
.ticon.act { background: #444; border-bottom: 3px solid #76b9ed; padding-top: 2px; margin-left: 2px; }
.ticon.und { width: 51px; margin-left: 6px; border-bottom: 3px solid #76b9ed; padding-top: 2px; }
.tray { margin-left: auto; display: flex; align-items: center; }
.tr { width: 30px; display: flex; justify-content: center; align-items: center; }
.clock { width: 92px; display: flex; flex-direction: column; align-items: center; font-size: 14px; color: #eee; line-height: 23px; }
.notif { width: 50px; display: flex; justify-content: center; }
.showdesk { width: 16px; height: 50px; border-right: 1px solid #555; }
```
